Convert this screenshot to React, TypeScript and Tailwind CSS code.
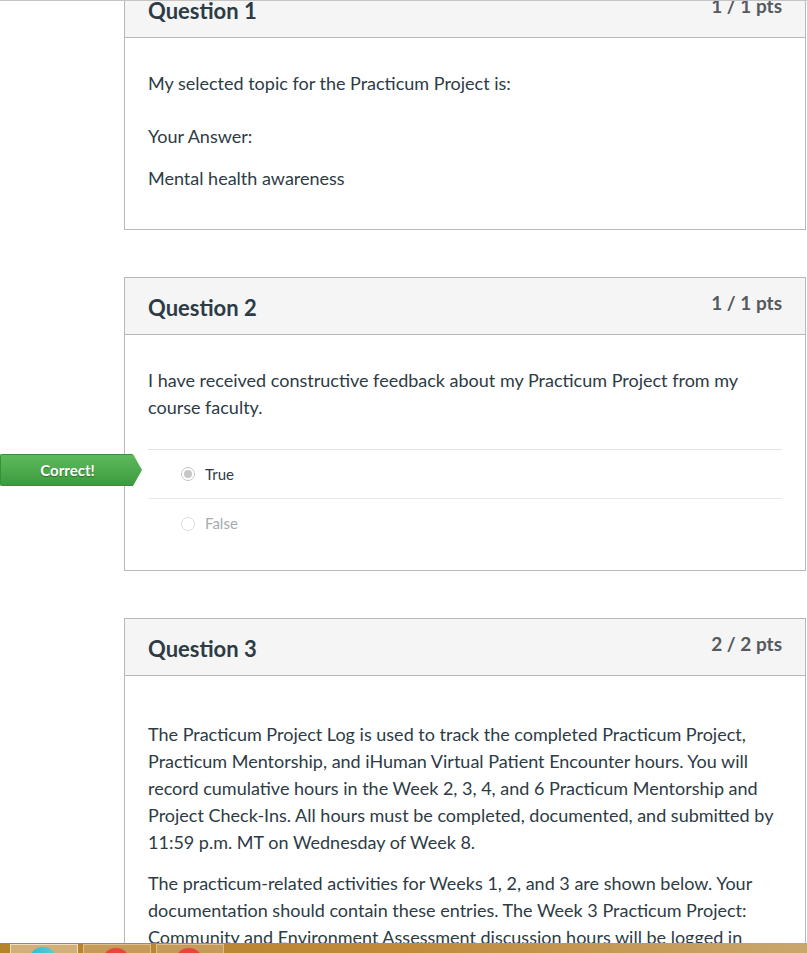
import React from "react";

function Header({ title, pts }: { title: string; pts: string }) {
  return (
    <div className="h-[57px] bg-[#f5f5f5] border-b border-[#b8b8b8] px-[23px] flex justify-between items-start">
      <div className="pt-[16px] text-[22px] leading-[28px] font-bold text-[#2d3b45]">{title}</div>
      <div className="pt-[13px] text-[19px] leading-[24px] font-bold text-[#555a5e]">{pts}</div>
    </div>
  );
}

function Radio({ checked }: { checked: boolean }) {
  return (
    <span
      className={
        "w-[14px] h-[14px] rounded-full border flex items-center justify-center bg-white " +
        (checked ? "border-[#c4c4c4]" : "border-[#dcdcdc]")
      }
    >
      {checked && <span className="w-[8px] h-[8px] rounded-full bg-[#c6c6c6]" />}
    </span>
  );
}

export default function App() {
  return (
    <div className="w-[807px] h-[953px] overflow-hidden bg-white flex flex-col font-['Lato','Noto_Sans',sans-serif] text-[#2d3b45]">
      <div className="h-px bg-[#c4c4c4] shrink-0" />
      <div className="flex-1 overflow-hidden pl-[124px]">
        <div className="-mt-[21px] w-[682px] flex flex-col gap-[47px]">
          {/* Question 1 */}
          <div className="border border-[#b8b8b8]">
            <Header title="Question 1" pts="1 / 1 pts" />
            <div className="px-[23px] pt-[32px] pb-[37px] text-[18px] leading-[27px]">
              <p>My selected topic for the Practicum Project is:</p>
              <p className="mt-[26px]">Your Answer:</p>
              <p className="mt-[15px]">Mental health awareness</p>
            </div>
          </div>

          {/* Question 2 */}
          <div className="border border-[#b8b8b8]">
            <Header title="Question 2" pts="1 / 1 pts" />
            <div className="px-[23px] pt-[32px] pb-[22px] text-[18px] leading-[27px]">
              <p>I have received constructive feedback about my Practicum Project from my course faculty.</p>
              <div className="mt-[28px] border-t border-[#e3e3e3]">
                <div className="relative h-[49px] flex items-center gap-[10px] pl-[33px] border-b border-[#e8e8e8]">
                  <div className="absolute left-[-148px] top-[4px] flex items-stretch h-[32px]">
                    <div className="w-[132px] bg-gradient-to-b from-[#5cba5c] to-[#3e9a3e] rounded-l-[2px] border-y border-l border-[#3a8f3a] flex items-center justify-center">
                      <span className="text-white font-bold text-[15px] leading-none [text-shadow:0_1px_1px_rgba(0,0,0,0.35)] pl-[2px]">
                        Correct!
                      </span>
                    </div>
                    <svg width="10" height="32" viewBox="0 0 10 32" className="block">
                      <defs>
                        <linearGradient id="cg" x1="0" y1="0" x2="0" y2="1">
                          <stop offset="0" stopColor="#5cba5c" />
                          <stop offset="1" stopColor="#3e9a3e" />
                        </linearGradient>
                      </defs>
                      <path d="M0 0 L1 0 L10 16 L1 32 L0 32 Z" fill="url(#cg)" />
                    </svg>
                  </div>
                  <Radio checked />
                  <span className="text-[15px] text-[#2d3b45]">True</span>
                </div>
                <div className="h-[49px] flex items-center gap-[10px] pl-[33px]">
                  <Radio checked={false} />
                  <span className="text-[15px] text-[#a5abaf]">False</span>
                </div>
              </div>
            </div>
          </div>

          {/* Question 3 */}
          <div className="border border-[#b8b8b8]">
            <Header title="Question 3" pts="2 / 2 pts" />
            <div className="px-[23px] pt-[45px] pb-[30px] text-[18px] leading-[27px]">
              <p>
                The Practicum Project Log is used to track the completed Practicum Project, Practicum Mentorship, and iHuman
                Virtual Patient Encounter hours. You will record cumulative hours in the Week 2, 3, 4, and 6 Practicum
                Mentorship and Project Check-Ins. All hours must be completed, documented, and submitted by 11:59 p.m. MT on
                Wednesday of Week 8.
              </p>
              <p className="mt-[14px]">
                The practicum-related activities for Weeks 1, 2, and 3 are shown below. Your documentation should contain
                these entries. The Week 3 Practicum Project: Community and Environment Assessment discussion hours will be
                logged in
                <br />
                the Week 3 Practicum Mentorship and Project Check-In.
              </p>
            </div>
          </div>
        </div>
      </div>
      {/* taskbar */}
      <div className="h-[10px] shrink-0 bg-gradient-to-r from-[#b5832c] via-[#c08a3a] to-[#c9a66c] flex items-start gap-[5px] pl-[10px] pt-[1px] overflow-hidden">
        <div className="relative w-[68px] h-[12px] bg-[#d2ae78] border border-[#f0dfbd] overflow-hidden">
          <div className="absolute left-[18px] top-[2px] w-[28px] h-[28px] rounded-full bg-gradient-to-r from-[#2fb8e0] to-[#5ad0c8]" />
        </div>
        <div className="relative w-[68px] h-[12px] bg-[#c69a58] border border-[#dcbf8c] overflow-hidden">
          <div className="absolute left-[18px] top-[3px] w-[28px] h-[28px] rounded-full bg-[#e8453c]" />
        </div>
        <div className="relative w-[68px] h-[12px] bg-[#c69a58] border border-[#dcbf8c] overflow-hidden">
          <div className="absolute left-[18px] top-[3px] w-[28px] h-[28px] rounded-full bg-[#e8453c]" />
        </div>
      </div>
    </div>
  );
}
